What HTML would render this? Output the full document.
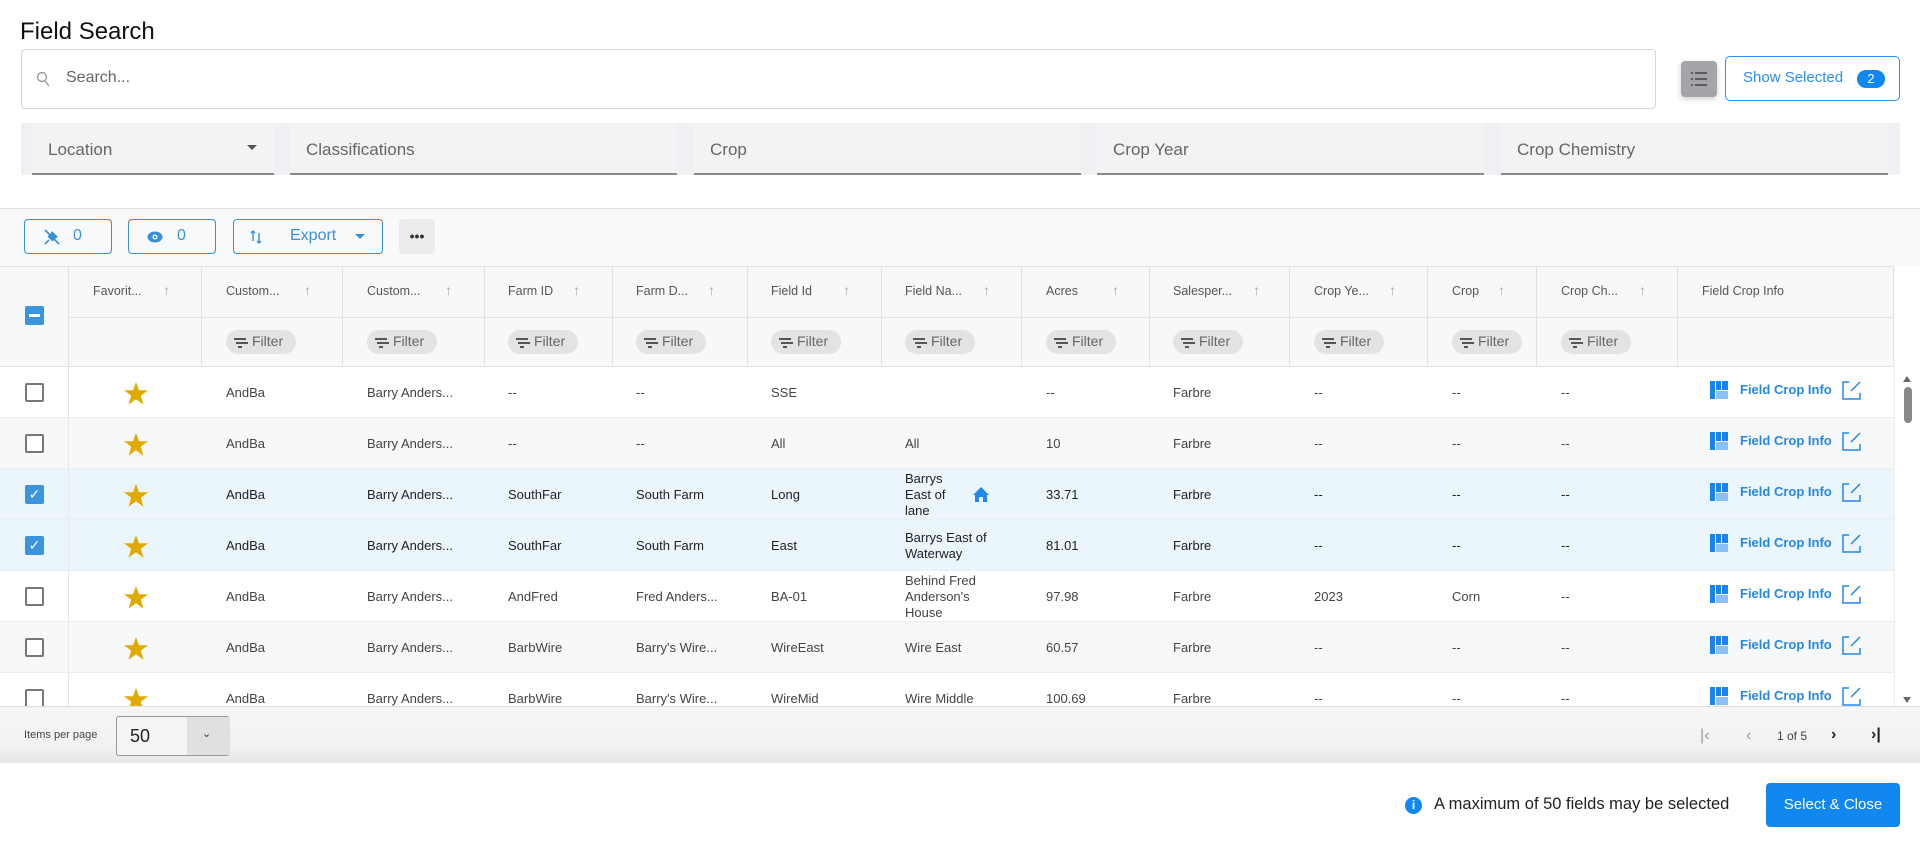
<!DOCTYPE html>
<html><head><meta charset="utf-8"><style>
*{box-sizing:border-box;margin:0;padding:0}
body{width:1920px;height:847px;background:#fff;font-family:"Liberation Sans",sans-serif;position:relative;overflow:hidden;color:#333}
.a{position:absolute}
.title{left:20px;top:18px;font-size:24px;color:#111}
.search{left:21px;top:49px;width:1635px;height:60px;border:1px solid #d6d6d6;border-radius:4px}
.search span{position:absolute;left:44px;top:19px;font-size:16px;color:#666}
.fbar{left:21px;top:123px;width:1879px;height:52px;background:#eef0f3}
.fld{top:123px;height:52px;background:#f3f3f3;border-bottom:2px solid #8a8a8a;font-size:17px;color:#666;padding:17px 0 0 16px}
.tb{left:0;top:208px;width:1920px;height:58px;background:#f8f9fa;border-top:1px solid #ddd}
.btn{top:219px;height:35px;border:1px solid #3a8fd9;border-radius:4px;color:#3a8fd9;font-size:16px}
.hdr{left:0;top:266px;width:1894px;height:101px;background:#f7f8fa;border-top:1px solid #e2e2e2;border-bottom:1px solid #e2e2e2}
.hl{top:317px;left:68px;width:1826px;height:1px;background:#e2e2e2}
.vl{top:266px;width:1px;height:101px;background:#e2e2e2}
.ht{top:284px;font-size:12.5px;color:#555}
.ar{top:282px;font-size:14px;color:#aaa;font-weight:lighter}
.fp{top:330px;height:24px;width:70px;border-radius:12px;background:#e3e3e3;font-size:14px;color:#666;padding:3px 0 0 26px}
.fp:before{content:"";position:absolute;left:8px;top:8px;width:12px;height:2px;background:#555;box-shadow:2px 4px 0 -0px #555}
.fp:after{content:"";position:absolute;left:12px;top:16px;width:4px;height:2px;background:#555}
.row{left:0;width:1894px;height:51px;border-bottom:1px solid #ebedf0}
.c{font-size:13px;color:#444}
.cb{left:25px;width:19px;height:19px;border:2px solid #777;border-radius:2px;background:#fff}
.cbk{left:25px;width:19px;height:19px;border-radius:2px;background:#3a95de}
.star{left:124px;width:24px;height:23px}
.fci{left:1712px;font-size:13px;font-weight:bold;color:#2488e8}
</style></head><body>
<svg width="0" height="0" style="position:absolute"><defs><symbol id="st" viewBox="0 0 24 23"><path d="M12 0l3 8.3h9l-7.2 5.4 2.7 9-7.5-5.5-7.5 5.5 2.7-9L0 8.3h9z" fill="#e0ab00"/></symbol></defs></svg>
<div class="a title">Field Search</div>
<div class="a search"><svg class="a" style="left:14px;top:21px" width="16" height="18" viewBox="0 0 16 18"><circle cx="6" cy="6" r="4.5" fill="none" stroke="#999" stroke-width="1.4"/><path d="M9 10l4 5" stroke="#999" stroke-width="1.4"/></svg><span>Search...</span></div>
<div class="a" style="left:1681px;top:61px;width:36px;height:36px;background:#a3a5a8;border-radius:4px;box-shadow:0 2px 6px rgba(0,0,0,.2)"><svg width="36" height="36"><g stroke="#444" stroke-width="1.5"><path d="M10 12h2M14 12h12M10 18h2M14 18h12M10 24h2M14 24h12"/></g></svg></div>
<div class="a" style="left:1725px;top:56px;width:175px;height:45px;border:1px solid #2a8fee;border-radius:5px;color:#2a8fee;font-size:15px"><span class="a" style="left:17px;top:12px">Show Selected</span><span class="a" style="left:131px;top:13px;width:28px;height:18px;border-radius:9px;background:#1088f0;color:#fff;font-size:13px;text-align:center;line-height:18px">2</span></div>
<div class="a fbar"></div>
<div class="a fld" style="left:32px;width:242px">Location<span class="a" style="left:215px;top:22px;border:5px solid transparent;border-top:5px solid #555"></span></div>
<div class="a fld" style="left:290px;width:387px">Classifications</div>
<div class="a fld" style="left:694px;width:387px">Crop</div>
<div class="a fld" style="left:1097px;width:387px">Crop Year</div>
<div class="a fld" style="left:1501px;width:387px">Crop Chemistry</div>
<div class="a tb"></div>
<div class="a btn" style="left:24px;width:88px"><svg class="a" style="left:18px;top:8px" width="18" height="18" viewBox="0 0 18 18"><path d="M2 2l14 14" stroke="#3a8fd9" stroke-width="1.6"/><path d="M9 3l6 6-2 1-3 3-1 0-4-4 0-1 3-3z" fill="#3a8fd9"/><path d="M6 12l-4 4" stroke="#3a8fd9" stroke-width="1.6"/></svg><span class="a" style="left:48px;top:7px">0</span></div>
<div class="a btn" style="left:128px;width:88px"><svg class="a" style="left:18px;top:11px" width="16" height="12"><ellipse cx="8" cy="6" rx="7.5" ry="5.5" fill="#3a8fd9"/><circle cx="8" cy="6" r="2.5" fill="#fff"/><circle cx="8" cy="6" r="1.3" fill="#3a8fd9"/></svg><span class="a" style="left:48px;top:7px">0</span></div>
<div class="a btn" style="left:233px;width:150px"><svg class="a" style="left:16px;top:9px" width="12" height="16" viewBox="0 0 12 16"><path d="M3 12V2M1 4l2-2 2 2M9 4v10M7 12l2 2 2-2" fill="none" stroke="#3a8fd9" stroke-width="1.4"/></svg><span class="a" style="left:56px;top:7px">Export</span><span class="a" style="left:121px;top:14px;border:5px solid transparent;border-top:5px solid #3a8fd9"></span></div>
<div class="a" style="left:399px;top:219px;width:36px;height:35px;background:#ececec;border-radius:4px;font-size:14px;text-align:center;line-height:34px;color:#333;font-weight:bold">•••</div>
<div class="a hdr"></div>
<div class="a hl"></div>
<div class="a cbk" style="top:306px"><div style="position:absolute;left:4px;top:8px;width:11px;height:3px;background:#fff"></div></div>
<div class="a vl" style="left:68px"></div><div class="a vl" style="left:201px"></div><div class="a vl" style="left:342px"></div><div class="a vl" style="left:484px"></div><div class="a vl" style="left:612px"></div><div class="a vl" style="left:747px"></div><div class="a vl" style="left:881px"></div><div class="a vl" style="left:1021px"></div><div class="a vl" style="left:1149px"></div><div class="a vl" style="left:1289px"></div><div class="a vl" style="left:1427px"></div><div class="a vl" style="left:1536px"></div><div class="a vl" style="left:1677px"></div><div class="a vl" style="left:1893px"></div>
<div class="a ht" style="left:93px">Favorit...</div><div class="a ar" style="left:163px">↑</div>
<div class="a ht" style="left:226px">Custom...</div><div class="a ar" style="left:304px">↑</div>
<div class="a ht" style="left:367px">Custom...</div><div class="a ar" style="left:445px">↑</div>
<div class="a ht" style="left:508px">Farm ID</div><div class="a ar" style="left:573px">↑</div>
<div class="a ht" style="left:636px">Farm D...</div><div class="a ar" style="left:708px">↑</div>
<div class="a ht" style="left:771px">Field Id</div><div class="a ar" style="left:843px">↑</div>
<div class="a ht" style="left:905px">Field Na...</div><div class="a ar" style="left:983px">↑</div>
<div class="a ht" style="left:1046px">Acres</div><div class="a ar" style="left:1112px">↑</div>
<div class="a ht" style="left:1173px">Salesper...</div><div class="a ar" style="left:1253px">↑</div>
<div class="a ht" style="left:1314px">Crop Ye...</div><div class="a ar" style="left:1389px">↑</div>
<div class="a ht" style="left:1452px">Crop</div><div class="a ar" style="left:1498px">↑</div>
<div class="a ht" style="left:1561px">Crop Ch...</div><div class="a ar" style="left:1639px">↑</div>
<div class="a ht" style="left:1702px">Field Crop Info</div>
<div class="a fp" style="left:226px">Filter</div><div class="a fp" style="left:367px">Filter</div><div class="a fp" style="left:508px">Filter</div><div class="a fp" style="left:636px">Filter</div><div class="a fp" style="left:771px">Filter</div><div class="a fp" style="left:905px">Filter</div><div class="a fp" style="left:1046px">Filter</div><div class="a fp" style="left:1173px">Filter</div><div class="a fp" style="left:1314px">Filter</div><div class="a fp" style="left:1452px">Filter</div><div class="a fp" style="left:1561px">Filter</div>

<div class="a" style="left:0;top:367px;width:1894px;height:339px;overflow:hidden">
<div class="a" style="left:68px;top:0;width:1px;height:339px;background:#e8e8e8;z-index:2"></div>
<div class="a row" style="top:0;background:#fff"></div>
<div class="a row" style="top:51px;background:#f7f8fa"></div>
<div class="a row" style="top:102px;background:#eaf5fc"></div>
<div class="a row" style="top:153px;background:#eaf5fc"></div>
<div class="a row" style="top:204px;background:#fff"></div>
<div class="a row" style="top:255px;background:#f7f8fa"></div>
<div class="a row" style="top:306px;background:#fff"></div>

<div class="a cb" style="top:16px"></div>
<div class="a cb" style="top:67px"></div>
<div class="a cbk" style="top:118px;color:#fff;font-size:14px;text-align:center;line-height:19px">✓</div>
<div class="a cbk" style="top:169px;color:#fff;font-size:14px;text-align:center;line-height:19px">✓</div>
<div class="a cb" style="top:220px"></div>
<div class="a cb" style="top:271px"></div>
<div class="a cb" style="top:322px"></div>

<svg class="a star" style="top:15px"><use href="#st"/></svg>
<svg class="a star" style="top:66px"><use href="#st"/></svg>
<svg class="a star" style="top:117px"><use href="#st"/></svg>
<svg class="a star" style="top:168px"><use href="#st"/></svg>
<svg class="a star" style="top:219px"><use href="#st"/></svg>
<svg class="a star" style="top:270px"><use href="#st"/></svg>
<svg class="a star" style="top:321px"><use href="#st"/></svg>

<div class="a c" style="top:18px;left:226px">AndBa</div><div class="a c" style="top:18px;left:367px">Barry Anders...</div><div class="a c" style="top:18px;left:508px">--</div><div class="a c" style="top:18px;left:636px">--</div><div class="a c" style="top:18px;left:771px">SSE</div><div class="a c" style="top:18px;left:1046px">--</div><div class="a c" style="top:18px;left:1173px">Farbre</div><div class="a c" style="top:18px;left:1314px">--</div><div class="a c" style="top:18px;left:1452px">--</div><div class="a c" style="top:18px;left:1561px">--</div>
<div class="a c" style="top:69px;left:226px">AndBa</div><div class="a c" style="top:69px;left:367px">Barry Anders...</div><div class="a c" style="top:69px;left:508px">--</div><div class="a c" style="top:69px;left:636px">--</div><div class="a c" style="top:69px;left:771px">All</div><div class="a c" style="top:69px;left:905px">All</div><div class="a c" style="top:69px;left:1046px">10</div><div class="a c" style="top:69px;left:1173px">Farbre</div><div class="a c" style="top:69px;left:1314px">--</div><div class="a c" style="top:69px;left:1452px">--</div><div class="a c" style="top:69px;left:1561px">--</div>
<div class="a c" style="top:120px;left:226px;color:#222">AndBa</div><div class="a c" style="top:120px;left:367px;color:#222">Barry Anders...</div><div class="a c" style="top:120px;left:508px;color:#222">SouthFar</div><div class="a c" style="top:120px;left:636px;color:#222">South Farm</div><div class="a c" style="top:120px;left:771px;color:#222">Long</div><div class="a c" style="top:104px;left:905px;color:#222;line-height:16px">Barrys<br>East of<br>lane</div>
<svg class="a" style="left:972px;top:119px" width="18" height="17" viewBox="0 0 18 17"><path d="M9 1L1 9h2v7h4v-5h4v5h4V9h2z" fill="#2488e8"/></svg>
<div class="a c" style="top:120px;left:1046px;color:#222">33.71</div><div class="a c" style="top:120px;left:1173px;color:#222">Farbre</div><div class="a c" style="top:120px;left:1314px;color:#222">--</div><div class="a c" style="top:120px;left:1452px;color:#222">--</div><div class="a c" style="top:120px;left:1561px;color:#222">--</div>
<div class="a c" style="top:171px;left:226px;color:#222">AndBa</div><div class="a c" style="top:171px;left:367px;color:#222">Barry Anders...</div><div class="a c" style="top:171px;left:508px;color:#222">SouthFar</div><div class="a c" style="top:171px;left:636px;color:#222">South Farm</div><div class="a c" style="top:171px;left:771px;color:#222">East</div><div class="a c" style="top:163px;left:905px;color:#222;line-height:16px">Barrys East of<br>Waterway</div><div class="a c" style="top:171px;left:1046px;color:#222">81.01</div><div class="a c" style="top:171px;left:1173px;color:#222">Farbre</div><div class="a c" style="top:171px;left:1314px;color:#222">--</div><div class="a c" style="top:171px;left:1452px;color:#222">--</div><div class="a c" style="top:171px;left:1561px;color:#222">--</div>
<div class="a c" style="top:222px;left:226px">AndBa</div><div class="a c" style="top:222px;left:367px">Barry Anders...</div><div class="a c" style="top:222px;left:508px">AndFred</div><div class="a c" style="top:222px;left:636px">Fred Anders...</div><div class="a c" style="top:222px;left:771px">BA-01</div><div class="a c" style="top:206px;left:905px;line-height:16px">Behind Fred<br>Anderson's<br>House</div><div class="a c" style="top:222px;left:1046px">97.98</div><div class="a c" style="top:222px;left:1173px">Farbre</div><div class="a c" style="top:222px;left:1314px">2023</div><div class="a c" style="top:222px;left:1452px">Corn</div><div class="a c" style="top:222px;left:1561px">--</div>
<div class="a c" style="top:273px;left:226px">AndBa</div><div class="a c" style="top:273px;left:367px">Barry Anders...</div><div class="a c" style="top:273px;left:508px">BarbWire</div><div class="a c" style="top:273px;left:636px">Barry's Wire...</div><div class="a c" style="top:273px;left:771px">WireEast</div><div class="a c" style="top:273px;left:905px">Wire East</div><div class="a c" style="top:273px;left:1046px">60.57</div><div class="a c" style="top:273px;left:1173px">Farbre</div><div class="a c" style="top:273px;left:1314px">--</div><div class="a c" style="top:273px;left:1452px">--</div><div class="a c" style="top:273px;left:1561px">--</div>
<div class="a c" style="top:324px;left:226px">AndBa</div><div class="a c" style="top:324px;left:367px">Barry Anders...</div><div class="a c" style="top:324px;left:508px">BarbWire</div><div class="a c" style="top:324px;left:636px">Barry's Wire...</div><div class="a c" style="top:324px;left:771px">WireMid</div><div class="a c" style="top:324px;left:905px">Wire Middle</div><div class="a c" style="top:324px;left:1046px">100.69</div><div class="a c" style="top:324px;left:1173px">Farbre</div><div class="a c" style="top:324px;left:1314px">--</div><div class="a c" style="top:324px;left:1452px">--</div><div class="a c" style="top:324px;left:1561px">--</div>

<div class="a" style="left:1710px;top:14px"><svg width="20" height="19"><rect x="0" y="0" width="5" height="18" fill="#1a84ee"/><rect x="6" y="0" width="5" height="9" fill="#1a84ee"/><rect x="12" y="0" width="6" height="9" fill="#1a84ee"/><rect x="6" y="10" width="12" height="8" fill="#8cc0f4"/></svg><span class="a fci" style="left:30px;top:1px;white-space:nowrap">Field&nbsp;Crop&nbsp;Info</span><svg class="a" style="left:132px;top:0" width="19" height="19"><path d="M7 1H1v17h17v-6M18 1L9 10" fill="none" stroke="#2488e8" stroke-width="1.5"/></svg></div>
<div class="a" style="left:1710px;top:65px"><svg width="20" height="19"><rect x="0" y="0" width="5" height="18" fill="#1a84ee"/><rect x="6" y="0" width="5" height="9" fill="#1a84ee"/><rect x="12" y="0" width="6" height="9" fill="#1a84ee"/><rect x="6" y="10" width="12" height="8" fill="#8cc0f4"/></svg><span class="a fci" style="left:30px;top:1px;white-space:nowrap">Field&nbsp;Crop&nbsp;Info</span><svg class="a" style="left:132px;top:0" width="19" height="19"><path d="M7 1H1v17h17v-6M18 1L9 10" fill="none" stroke="#2488e8" stroke-width="1.5"/></svg></div>
<div class="a" style="left:1710px;top:116px"><svg width="20" height="19"><rect x="0" y="0" width="5" height="18" fill="#1a84ee"/><rect x="6" y="0" width="5" height="9" fill="#1a84ee"/><rect x="12" y="0" width="6" height="9" fill="#1a84ee"/><rect x="6" y="10" width="12" height="8" fill="#8cc0f4"/></svg><span class="a fci" style="left:30px;top:1px;white-space:nowrap">Field&nbsp;Crop&nbsp;Info</span><svg class="a" style="left:132px;top:0" width="19" height="19"><path d="M7 1H1v17h17v-6M18 1L9 10" fill="none" stroke="#2488e8" stroke-width="1.5"/></svg></div>
<div class="a" style="left:1710px;top:167px"><svg width="20" height="19"><rect x="0" y="0" width="5" height="18" fill="#1a84ee"/><rect x="6" y="0" width="5" height="9" fill="#1a84ee"/><rect x="12" y="0" width="6" height="9" fill="#1a84ee"/><rect x="6" y="10" width="12" height="8" fill="#8cc0f4"/></svg><span class="a fci" style="left:30px;top:1px;white-space:nowrap">Field&nbsp;Crop&nbsp;Info</span><svg class="a" style="left:132px;top:0" width="19" height="19"><path d="M7 1H1v17h17v-6M18 1L9 10" fill="none" stroke="#2488e8" stroke-width="1.5"/></svg></div>
<div class="a" style="left:1710px;top:218px"><svg width="20" height="19"><rect x="0" y="0" width="5" height="18" fill="#1a84ee"/><rect x="6" y="0" width="5" height="9" fill="#1a84ee"/><rect x="12" y="0" width="6" height="9" fill="#1a84ee"/><rect x="6" y="10" width="12" height="8" fill="#8cc0f4"/></svg><span class="a fci" style="left:30px;top:1px;white-space:nowrap">Field&nbsp;Crop&nbsp;Info</span><svg class="a" style="left:132px;top:0" width="19" height="19"><path d="M7 1H1v17h17v-6M18 1L9 10" fill="none" stroke="#2488e8" stroke-width="1.5"/></svg></div>
<div class="a" style="left:1710px;top:269px"><svg width="20" height="19"><rect x="0" y="0" width="5" height="18" fill="#1a84ee"/><rect x="6" y="0" width="5" height="9" fill="#1a84ee"/><rect x="12" y="0" width="6" height="9" fill="#1a84ee"/><rect x="6" y="10" width="12" height="8" fill="#8cc0f4"/></svg><span class="a fci" style="left:30px;top:1px;white-space:nowrap">Field&nbsp;Crop&nbsp;Info</span><svg class="a" style="left:132px;top:0" width="19" height="19"><path d="M7 1H1v17h17v-6M18 1L9 10" fill="none" stroke="#2488e8" stroke-width="1.5"/></svg></div>
<div class="a" style="left:1710px;top:320px"><svg width="20" height="19"><rect x="0" y="0" width="5" height="18" fill="#1a84ee"/><rect x="6" y="0" width="5" height="9" fill="#1a84ee"/><rect x="12" y="0" width="6" height="9" fill="#1a84ee"/><rect x="6" y="10" width="12" height="8" fill="#8cc0f4"/></svg><span class="a fci" style="left:30px;top:1px;white-space:nowrap">Field&nbsp;Crop&nbsp;Info</span><svg class="a" style="left:132px;top:0" width="19" height="19"><path d="M7 1H1v17h17v-6M18 1L9 10" fill="none" stroke="#2488e8" stroke-width="1.5"/></svg></div>
</div>
<div class="a" style="left:1894px;top:367px;width:26px;height:339px;background:#fff;border-left:1px solid #eee"></div>
<div class="a" style="left:1903px;top:372px;border:4px solid transparent;border-bottom:6px solid #666"></div>
<div class="a" style="left:1903px;top:697px;border:4px solid transparent;border-top:6px solid #666"></div>
<div class="a" style="left:1904px;top:387px;width:8px;height:36px;border-radius:4px;background:#888"></div>
<div class="a" style="left:0;top:706px;width:1920px;height:57px;background:linear-gradient(#f5f5f5,#f2f2f2 70%,#e6e6e6);border-top:1px solid #ddd"></div>
<div class="a" style="left:24px;top:729px;font-size:11px;color:#444">Items per page</div>
<div class="a" style="left:116px;top:716px;width:114px;height:40px;border:1px solid #999;border-radius:3px;background:#f4f4f4"><span class="a" style="left:13px;top:9px;font-size:18px;color:#222">50</span><div class="a" style="left:70px;top:0;width:43px;height:38px;background:#e0e0e0"><span class="a" style="left:15px;top:10px;font-size:11px;color:#333">⌄</span></div></div>
<div class="a" style="left:1700px;top:727px;font-size:16px;color:#999">|‹</div>
<div class="a" style="left:1746px;top:727px;font-size:16px;color:#999">‹</div>
<div class="a" style="left:1777px;top:729px;font-size:12px;color:#444">1 of 5</div>
<div class="a" style="left:1831px;top:726px;font-size:16px;color:#222;font-weight:bold">›</div>
<div class="a" style="left:1871px;top:726px;font-size:16px;color:#222;font-weight:bold">›|</div>
<div class="a" style="left:1405px;top:797px;width:17px;height:17px;border-radius:50%;background:#1088f0;color:#fff;font-size:12px;font-weight:bold;text-align:center;line-height:17px">i</div>
<div class="a" style="left:1434px;top:795px;font-size:16.5px;color:#222">A maximum of 50 fields may be selected</div>
<div class="a" style="left:1766px;top:783px;width:134px;height:44px;border-radius:4px;background:#1088f0;color:#fff;font-size:15px;text-align:center;line-height:44px">Select &amp; Close</div>
</body></html>
